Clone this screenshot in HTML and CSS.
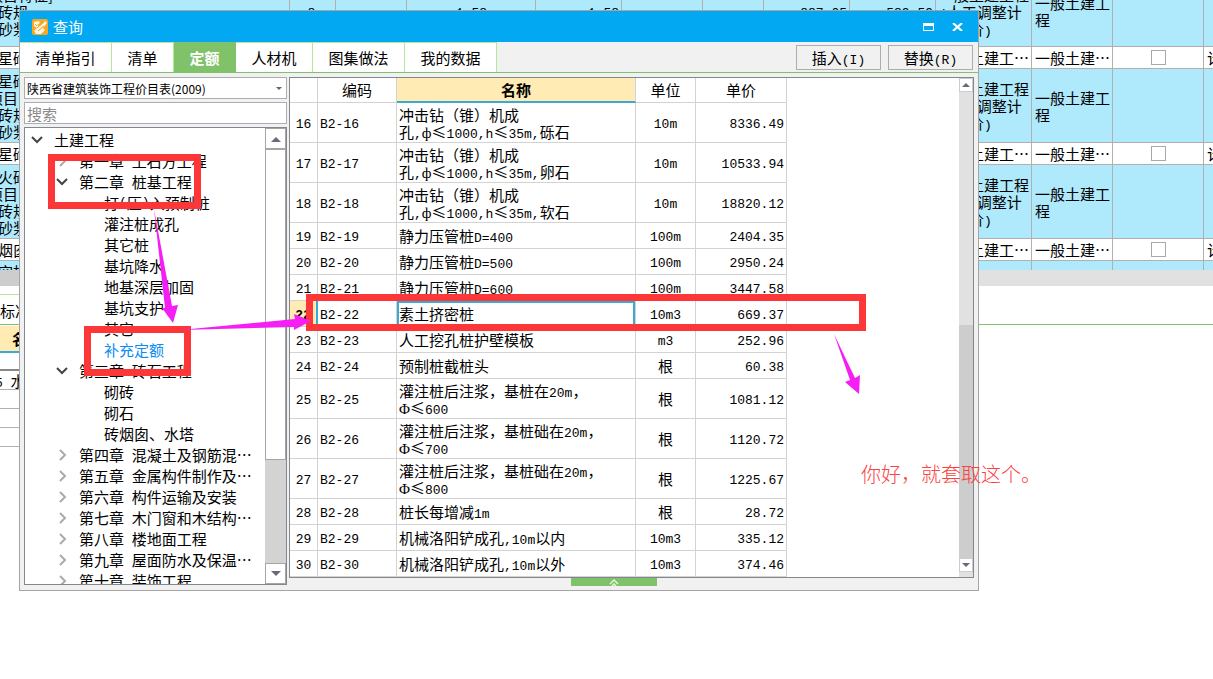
FILE: index.html
```html
<!DOCTYPE html>
<html lang="zh-CN">
<head>
<meta charset="utf-8">
<title>查询</title>
<link rel="stylesheet" href="styles.css">
</head>
<body>
<main class="desktop">
  <div class="sheet">
    <table class="sheet-table">
      <colgroup><col class="s-desc"><col class="s-no"><col class="s-a"><col class="s-b"><col class="s-c"><col class="s-d"><col class="s-e"><col class="s-c"><col class="s-c"><col class="s-fee"><col class="s-type"><col class="s-check"><col></colgroup>
      <tbody>
        <tr class="tall first"><td><span class="full">项目特征]</span><span class="half">砖规</span><span class="half">砂浆</span></td><td class="num mid">8</td><td></td><td class="num wide">1.58</td><td class="num">1.58</td><td></td><td></td><td class="num">887.05</td><td class="num">589.59</td><td>一般土建工程<br><i>(</i>人工调整计<br>市场价<i>)</i></td><td>一般土建工<br>程</td><td></td><td></td></tr>
        <tr class="short"><td><span class="half">星砌</span></td><td></td><td></td><td></td><td></td><td></td><td></td><td></td><td></td><td>一般土建工…</td><td>一般土建…</td><td class="mid"><input type="checkbox" aria-label="选择"></td><td>计</td></tr>
        <tr class="tall"><td><span class="half">星砌</span><span class="full">项目</span><span class="half">砖规</span><span class="half">砂浆</span></td><td></td><td></td><td></td><td></td><td></td><td></td><td></td><td></td><td>一般土建工程<br><i>(</i>人工调整计<br>市场价<i>)</i></td><td>一般土建工<br>程</td><td></td><td></td></tr>
        <tr class="short"><td><span class="half">星砌</span></td><td></td><td></td><td></td><td></td><td></td><td></td><td></td><td></td><td>一般土建工…</td><td>一般土建…</td><td class="mid"><input type="checkbox" aria-label="选择"></td><td>计</td></tr>
        <tr class="tall"><td><span class="half">火砖</span><span class="full">项目</span><span class="half">砖规</span><span class="half">砂浆</span></td><td></td><td></td><td></td><td></td><td></td><td></td><td></td><td></td><td>一般土建工程<br><i>(</i>人工调整计<br>市场价<i>)</i></td><td>一般土建工<br>程</td><td></td><td></td></tr>
        <tr class="short"><td><span class="half">烟囱</span></td><td></td><td></td><td></td><td></td><td></td><td></td><td></td><td></td><td>一般土建工…</td><td>一般土建…</td><td class="mid"><input type="checkbox" aria-label="选择"></td><td>计</td></tr>
        <tr class="short blue"><td><span class="half">空桩</span></td><td></td><td></td><td></td><td></td><td></td><td></td><td></td><td></td><td></td><td></td><td></td><td></td></tr>
      </tbody>
    </table>
  </div>
  <div class="sheet-scroll"><div></div></div>
  <div class="sub-tabs"><span>标准</span></div>
  <div class="sub-grid">
    <div class="sub-head">名称</div>
    <div class="sub-row thick"></div>
    <div class="sub-row"><i>5 </i>水</div>
    <div class="sub-row"></div><div class="sub-row"></div><div class="sub-row"></div>
  </div>

  <section class="window">
    <header class="titlebar">
      <svg class="logo" viewBox="0 0 16 16"><rect width="16" height="16" rx="2" fill="#f9a825"/><path d="M2 3l5-1 1 2-3 2 2 1 6-5 2 2-4 5 2 2-4 4H4l-2-3 3-3-3-2z" fill="#fff6e0"/><path d="M5 9l7-6M6 12l6-5M3 5l2 2" stroke="#ee9712" fill="none"/></svg>
      <h1>查询</h1>
      <button class="win-btn" aria-label="最大化"><svg viewBox="0 0 11 8"><path d="M.5 1v6.500h10V1" fill="none" stroke="#fff"/><path d="M0 0h11v3H0z" fill="#fff"/></svg></button>
      <button class="win-btn" aria-label="关闭"><svg viewBox="0 0 11 8"><path d="M1 0l9 8M10 0L1 8" stroke="#fff" stroke-width="2.200"/></svg></button>
    </header>
    <nav class="tabs">
      <button class="w4">清单指引</button><button class="w2">清单</button><button class="on">定额</button><button class="w3">人材机</button><button class="w4">图集做法</button><button class="w4">我的数据</button>
      <div class="actions"><button>插入<i>(I)</i></button><button>替换<i>(R)</i></button></div>
    </nav>
    <div class="body">
      <aside class="left">
        <div class="combo"><select aria-label="定额库"><option>陕西省建筑装饰工程价目表(2009)</option></select><svg viewBox="0 0 6 4"><path d="M0 0h6L3 3z" fill="#666"/></svg></div>
        <input class="search" type="text" placeholder="搜索" aria-label="搜索">
        <div class="tree">
          <ul>
            <li class="l0"><svg viewBox="0 0 12 12" class="open"><path d="M1 3l5 5 5-5"/></svg>土建工程</li>
            <li class="l1"><svg viewBox="0 0 12 12"><path d="M4 1l5 5-5 5"/></svg>第一章<i> </i>土石方工程</li>
            <li class="l1"><svg viewBox="0 0 12 12" class="open"><path d="M1 3l5 5 5-5"/></svg>第二章<i> </i>桩基工程</li>
            <li class="l2">打<i>(</i>压<i>)</i>入预制桩</li>
            <li class="l2">灌注桩成孔</li>
            <li class="l2">其它桩</li>
            <li class="l2">基坑降水</li>
            <li class="l2">地基深层加固</li>
            <li class="l2">基坑支护</li>
            <li class="l2">其它</li>
            <li class="l2 picked">补充定额</li>
            <li class="l1"><svg viewBox="0 0 12 12" class="open"><path d="M1 3l5 5 5-5"/></svg>第三章<i> </i>砖石工程</li>
            <li class="l2">砌砖</li>
            <li class="l2">砌石</li>
            <li class="l2">砖烟囱、水塔</li>
            <li class="l1"><svg viewBox="0 0 12 12"><path d="M4 1l5 5-5 5"/></svg>第四章<i> </i>混凝土及钢筋混…</li>
            <li class="l1"><svg viewBox="0 0 12 12"><path d="M4 1l5 5-5 5"/></svg>第五章<i> </i>金属构件制作及…</li>
            <li class="l1"><svg viewBox="0 0 12 12"><path d="M4 1l5 5-5 5"/></svg>第六章<i> </i>构件运输及安装</li>
            <li class="l1"><svg viewBox="0 0 12 12"><path d="M4 1l5 5-5 5"/></svg>第七章<i> </i>木门窗和木结构…</li>
            <li class="l1"><svg viewBox="0 0 12 12"><path d="M4 1l5 5-5 5"/></svg>第八章<i> </i>楼地面工程</li>
            <li class="l1"><svg viewBox="0 0 12 12"><path d="M4 1l5 5-5 5"/></svg>第九章<i> </i>屋面防水及保温…</li>
            <li class="l1"><svg viewBox="0 0 12 12"><path d="M4 1l5 5-5 5"/></svg>第十章<i> </i>装饰工程</li>
          </ul>
          <div class="bar big"><button aria-label="向上"><svg viewBox="0 0 10 6"><path d="M0 6l5-5 5 5z"/></svg></button><div class="thumb"></div><div class="track"></div><button aria-label="向下"><svg viewBox="0 0 10 6"><path d="M0 0l5 5 5-5z"/></svg></button></div>
        </div>
      </aside>
      <div class="right">
        <div class="panel">
          <div class="table-area">
          <table class="grid">
            <colgroup><col class="g-no"><col class="g-code"><col class="g-name"><col class="g-unit"><col class="g-price"></colgroup>
            <thead><tr><th></th><th>编码</th><th class="hot">名称</th><th>单位</th><th>单价</th></tr></thead>
            <tbody>
              <tr class="two"><td>16</td><td>B2-16</td><td>冲击钻（锥）机成<br>孔<i>,</i><b>ф</b>≤<i>1000,h</i>≤<i>35m,</i>砾石</td><td>10m</td><td>8336.49</td></tr>
              <tr class="two"><td>17</td><td>B2-17</td><td>冲击钻（锥）机成<br>孔<i>,</i><b>ф</b>≤<i>1000,h</i>≤<i>35m,</i>卵石</td><td>10m</td><td>10533.94</td></tr>
              <tr class="two"><td>18</td><td>B2-18</td><td>冲击钻（锥）机成<br>孔<i>,</i><b>ф</b>≤<i>1000,h</i>≤<i>35m,</i>软石</td><td>10m</td><td>18820.12</td></tr>
              <tr><td>19</td><td>B2-19</td><td>静力压管桩<i>D=400</i></td><td>100m</td><td>2404.35</td></tr>
              <tr><td>20</td><td>B2-20</td><td>静力压管桩<i>D=500</i></td><td>100m</td><td>2950.24</td></tr>
              <tr><td>21</td><td>B2-21</td><td>静力压管桩<i>D=600</i></td><td>100m</td><td>3447.58</td></tr>
              <tr class="current"><td>22</td><td>B2-22</td><td>素土挤密桩</td><td>10m3</td><td>669.37</td></tr>
              <tr><td>23</td><td>B2-23</td><td>人工挖孔桩护壁模板</td><td>m3</td><td>252.96</td></tr>
              <tr><td>24</td><td>B2-24</td><td>预制桩截桩头</td><td><span>根</span></td><td>60.38</td></tr>
              <tr class="two"><td>25</td><td>B2-25</td><td>灌注桩后注浆，基桩在<i>20m</i>，<br><b>Φ</b>≤<i>600</i></td><td><span>根</span></td><td>1081.12</td></tr>
              <tr class="two"><td>26</td><td>B2-26</td><td>灌注桩后注浆，基桩础在<i>20m</i>，<br><b>Φ</b>≤<i>700</i></td><td><span>根</span></td><td>1120.72</td></tr>
              <tr class="two"><td>27</td><td>B2-27</td><td>灌注桩后注浆，基桩础在<i>20m</i>，<br><b>Φ</b>≤<i>800</i></td><td><span>根</span></td><td>1225.67</td></tr>
              <tr><td>28</td><td>B2-28</td><td>桩长每增减<i>1m</i></td><td><span>根</span></td><td>28.72</td></tr>
              <tr><td>29</td><td>B2-29</td><td>机械洛阳铲成孔<i>,10m</i>以内</td><td>10m3</td><td>335.12</td></tr>
              <tr><td>30</td><td>B2-30</td><td>机械洛阳铲成孔<i>,10m</i>以外</td><td>10m3</td><td>374.46</td></tr>
            </tbody>
          </table>
          </div>
          <div class="bar small"><button aria-label="向上"><svg viewBox="0 0 10 6"><path d="M1 5l4-4 4 4z"/></svg></button><div class="track"></div><div class="thumb"></div><button aria-label="向下"><svg viewBox="0 0 10 6"><path d="M1 1l4 4 4-4z"/></svg></button></div>
        </div>
        <button class="collapse" aria-label="展开"><svg viewBox="0 0 12 8"><path d="M2 6l4-4 4 4M4 8l2-2 2 2" fill="none" stroke="#e8f8e0" stroke-width="1.300"/></svg></button>
      </div>
    </div>
  </section>

  <div class="mark mark-chapter"></div>
  <div class="mark mark-item"></div>
  <div class="mark mark-row"></div>
  <svg class="arrows" width="900" height="420" viewBox="0 0 900 420" fill="#f51ff5"><path d="M154 209L172 306L178 305L173 323L162 308L165 308z"/><path d="M180 330L295 319L294 314L311 321L294 330L294 327z"/><path d="M834 334L855 378L860 375L859 394L845 382L850 380z"/></svg>
  <p class="note">你好，就套取这个。</p>
</main>
</body>
</html>
```
FILE: styles.css
```css
* { box-sizing: border-box; }
body { margin: 0; background: #fff; color: #000; font: 15px/17px "Noto Sans CJK SC", sans-serif; font-weight: 400; }
button, input, select { font: inherit; color: inherit; margin: 0; padding: 0; border-radius: 0; }
i { font: 13px/1px "Liberation Mono", monospace; }
b { font: 15px/1px "Liberation Serif", serif; }
table { border-collapse: separate; border-spacing: 0; table-layout: fixed; }
.desktop { position: relative; min-height: 100vh; overflow: hidden; }

/* estimate sheet behind the dialog */
.sheet { height: 270px; overflow: hidden; }
.sheet-table { width: 100%; margin-top: -24px; }
.s-desc { width: 290px; } .s-no { width: 46px; } .s-a { width: 71px; } .s-b { width: 129px; }
.s-c { width: 86px; } .s-d { width: 81px; } .s-e { width: 61px; }
.s-fee { width: 96px; } .s-type { width: 81px; } .s-check { width: 91px; }
.sheet-table td { padding: 0 0 0 3px; border-right: 1px solid #b0b0b0; border-bottom: 1px solid #b0b0b0; white-space: nowrap; overflow: hidden; }
.sheet-table td:last-child { border-right: 0; }
.tall { height: 74px; background: #aee9fc; }
.first { height: 71px; }
.short { height: 22px; }
.blue { background: #aee9fc; }
.half { display: block; margin-left: -5px; }
.full { display: block; margin-left: -15px; }
.sheet-table .num { font: 13px/17px "Liberation Mono", monospace; text-align: right; padding: 4px 2px 0 0; }
.sheet-table .wide { padding-right: 48px; }
.sheet-table .mid { text-align: center; padding-left: 0; }
.sheet input { appearance: none; display: block; width: 15px; height: 15px; margin: 0 auto; border: 1px solid #a8a8a8; background: #fff; }
.sheet-scroll { height: 16px; background: #e1e1e1; }
.sheet-scroll div { width: 20%; height: 16px; background: #cdcdcd; }
.sub-tabs { height: 39px; border-bottom: 1px solid #80c269; padding-top: 8px; }
.sub-tabs span { display: block; width: 300px; height: 30px; line-height: 31px; border-top: 1px solid #b5e6a0; }
.sub-grid { width: 300px; }
.sub-head { height: 27px; margin-top: 1px; padding-left: 12px; background: #ffebb3; border-bottom: 2px solid #3ba9d3; font-weight: 700; line-height: 25px; }
.sub-row { height: 19px; border-bottom: 1px solid #b0b0b0; line-height: 20px; text-indent: -5px; }
.sub-row.thick { height: 18px; border-bottom: 2px solid #888; }

/* dialog */
.window { position: absolute; left: 19px; top: 10px; width: calc(100% - 253px); border: 1px solid #a5a5a5; background: #f1f1f1; }
.titlebar { display: flex; align-items: center; height: 31px; padding: 0 15px 0 12px; background: #02a9f2; color: #fff; }
.logo { width: 16px; height: 16px; }
.titlebar h1 { flex: 1; margin: 0 0 0 5px; font-size: 15px; font-weight: 400; line-height: 31px; }
.win-btn { width: 11px; height: 12px; margin-left: 18px; border: 0; background: none; }
.win-btn svg { display: block; width: 11px; height: 8px; }
.tabs { display: flex; height: 31px; border-bottom: 1px solid #80c269; }
.tabs > button { border: solid #b5e6a0; border-width: 1px 1px 0 0; background: #fff; line-height: 30px; }
.tabs .w4 { width: 92px; } .tabs .w2 { width: 62px; } .tabs .w3 { width: 77px; }
.tabs .on { width: 62px; background: #80c269; border-color: #80c269; color: #fff; font-weight: 700; }
.actions { display: flex; gap: 7px; margin-left: auto; padding: 3px 5px 2px 0; }
.actions button { width: 85px; border: 1px solid #adadad; background: #f1f1f1; line-height: 22px; }
.body { display: flex; gap: 2px; padding: 4px; }
.left { display: flex; flex-direction: column; gap: 3px; flex: 0 0 263px; }
.combo { position: relative; height: 22px; }
.combo select { appearance: none; width: 100%; height: 22px; padding-left: 2px; border: 1px solid #abadb3; background: #fff; font-size: 12px; }
.combo svg { position: absolute; right: 5px; top: 10px; width: 6px; height: 4px; }
.search { width: 100%; height: 22px; padding: 0 2px; border: 1px solid #abadb3; background: #fff; }
.search::placeholder { color: #8a8a8a; opacity: 1; }
.tree { display: flex; height: 458px; border: 1px solid #828790; background: #fff; overflow: hidden; }
.tree ul { flex: 1; margin: 0; padding: 1px 0 0; list-style: none; overflow: hidden; }
.tree li { display: flex; align-items: center; height: 21px; line-height: 21px; white-space: pre; }
.tree li svg { width: 12px; height: 12px; margin-right: 11px; fill: none; stroke: #aaa; stroke-width: 2; }
.tree li .open { stroke: #444; }
.l0 { padding-left: 6px; } .l1 { padding-left: 31px; } .l2 { padding-left: 79px; }
.tree .picked { color: #0a8cf5; }
.bar { display: flex; flex-direction: column; }
.bar button { display: flex; align-items: center; justify-content: center; flex: none; border: 1px solid #a5a5a5; background: #fff; }
.bar svg { width: 10px; height: 6px; fill: #666a7a; }
.big { width: 21px; background: #d3d3d3; }
.big button { height: 21px; }
.big .thumb { flex: 3 0 0; border: 1px solid #a5a5a5; background: #fff; }
.big .track { flex: 1 0 0; }
.right { flex: 1; display: flex; flex-direction: column; align-items: center; min-width: 0; }
.panel { display: flex; width: 100%; border: 1px solid #828790; background: #fff; }
.table-area { flex: 1; min-width: 0; overflow: hidden; }
.small { width: 14px; padding-bottom: 5px; background: #e1e1e1; }
.small button { height: 14px; border-color: #ccc; }
.small .track { flex: 1 0 0; }
.small .thumb { flex: 1 0 0; background: #cdcdcd; }
.grid { width: 497px; }
.g-no { width: 28px; } .g-code { width: 79px; } .g-name { width: 239px; } .g-unit { width: 60px; } .g-price { width: 91px; }
.grid th, .grid td { border: solid #d3d3d3; border-width: 0 1px 1px 0; padding: 0 2px; white-space: nowrap; font-weight: 400; }
.grid th { height: 25px; padding-bottom: 2px; }
.grid .hot { background: #ffebb3; border-bottom: 2px solid #3ba9d3; font-weight: 700; padding-bottom: 0; }
.grid td { height: 26px; text-align: left; }
.grid .two td { height: 40px; }
.grid td:nth-child(-n+2), .grid td:nth-child(n+4) { padding-top: 3px; font-family: "Liberation Mono", monospace; font-size: 13px; }
.grid td span { display: block; margin-top: -3px; font: 15px/17px "Noto Sans CJK SC", sans-serif; }
.grid td:nth-child(1), .grid td:nth-child(4) { text-align: center; }
.grid td:nth-child(5) { text-align: right; }
.grid .current td:first-child { background: #ffebb3; font-weight: 700; border-right: 2px solid #3ba9d3; }
.grid .current td:nth-child(3) { box-shadow: inset 0 0 0 2px #3ba9d3; }
.collapse { width: 86px; height: 8px; margin-right: 36px; border: 0; background: #80c269; }
.collapse svg { display: block; width: 12px; height: 8px; margin: 0 auto; }

/* annotations drawn over the windows */
.mark { position: absolute; border: 7px solid #fd3737; }
.mark-chapter { left: 48px; top: 154px; width: 153px; height: 55px; }
.mark-item { left: 84px; top: 326px; width: 107px; height: 50px; }
.mark-row { left: 306px; top: 294px; width: 560px; height: 37px; }
.arrows { position: absolute; left: 0; top: 0; }
.note { position: absolute; left: 861px; top: 462px; margin: 0; color: #fd4040; font-size: 20px; font-weight: 300; line-height: 24px; white-space: nowrap; }
```
